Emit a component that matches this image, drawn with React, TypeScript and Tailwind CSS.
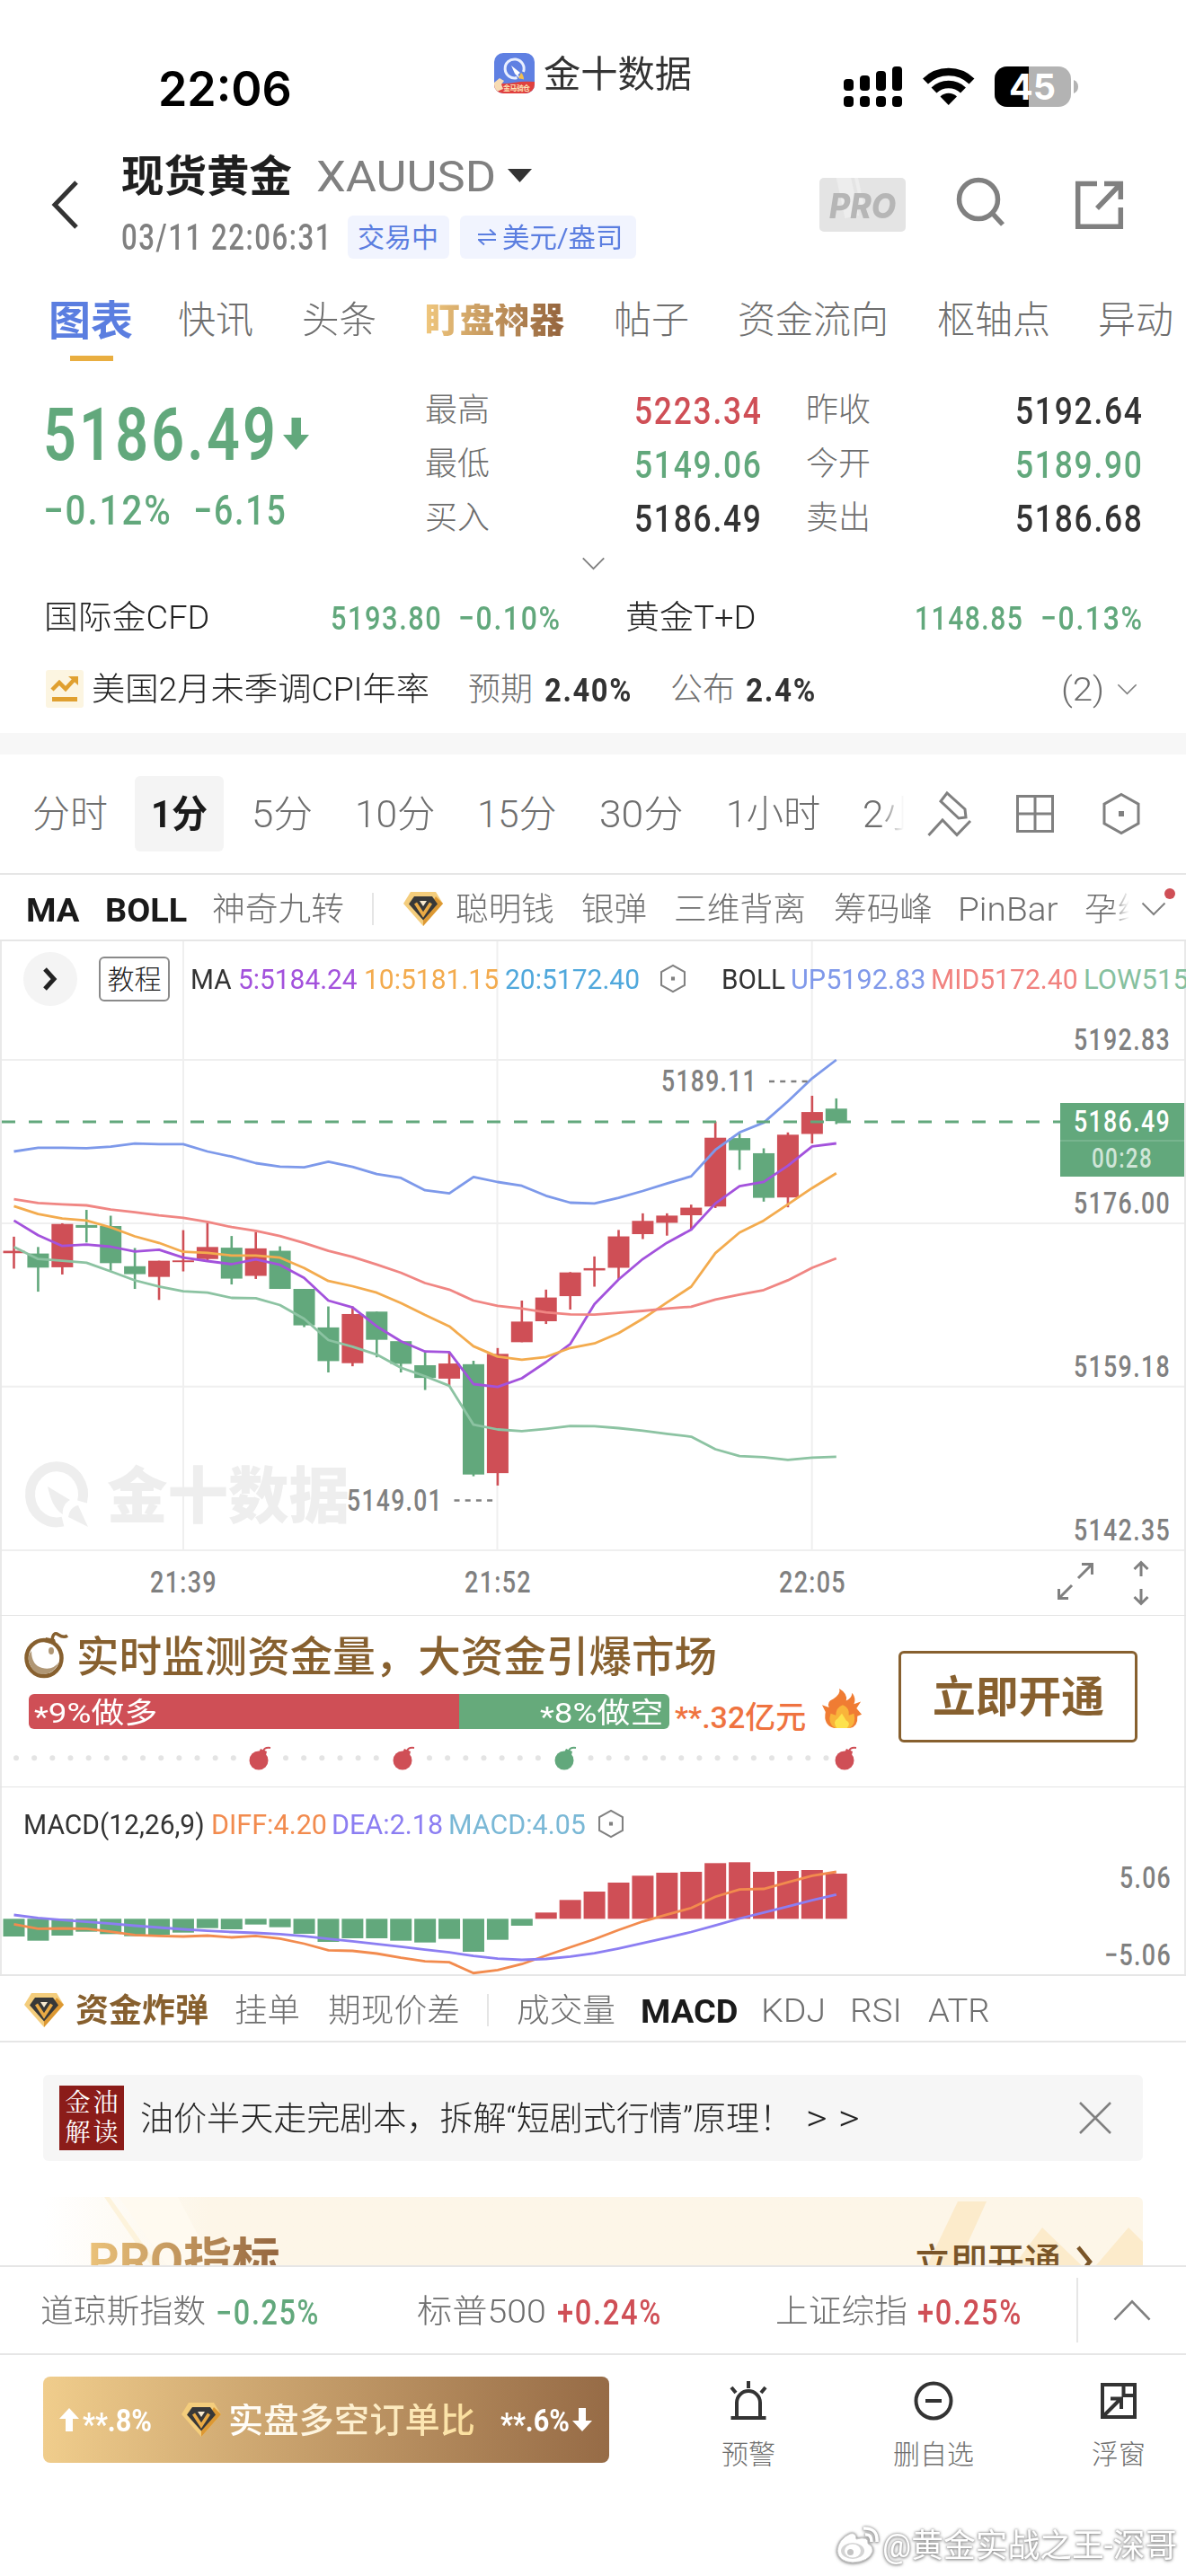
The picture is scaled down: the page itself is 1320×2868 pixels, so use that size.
import { useLayoutEffect, useRef, type ReactNode } from "react";

/* Text squeezed horizontally so that it fills the width given by its classes. */
function Fit({ className = "", inner = "", children }: { className?: string; inner?: string; children: ReactNode }) {
  const outerRef = useRef<HTMLSpanElement>(null);
  const innerRef = useRef<HTMLSpanElement>(null);
  useLayoutEffect(() => {
    const o = outerRef.current;
    const i = innerRef.current;
    if (!o || !i || !i.offsetWidth) return;
    i.style.transform = `scaleX(${o.clientWidth / i.offsetWidth})`;
  }, []);
  return (
    <span ref={outerRef} className={"block shrink-0 whitespace-nowrap leading-none " + className}>
      <span ref={innerRef} className={"relative top-px inline-block origin-left " + inner}>
        {children}
      </span>
    </span>
  );
}

/* Figures: open letter spacing with narrow digits. */
function Num({ className = "", children }: { className?: string; children: ReactNode }) {
  return (
    <Fit className={className} inner="tracking-[0.05em]">
      {children}
    </Fit>
  );
}

function Stars({ n }: { n: number }) {
  return <span className="relative top-[0.14em]">{"*".repeat(n)}</span>;
}

const RED = "#cf4f56";
const GREEN = "#62a87c";
const STEP = 26.92;
const cx = (i: number) => 15.5 + i * STEP;

/* ---------- icons ---------- */

function Diamond({ className = "" }: { className?: string }) {
  return (
    <svg viewBox="0 0 44 38" className={"h-[38px] w-[44px] shrink-0 " + className}>
      <path d="M8 0H36L44 13L22 38L0 13Z" fill="#f4cd7c" />
      <path d="M44 13L22 38V30L36 5Z" fill="#dc9833" />
      <path d="M12 5H32L38 13.5L22 31.500L6 13.500Z" fill="#383838" />
      <path d="M13.500 12.500L22 25.500L30.500 12.500" fill="none" stroke="#eaaa45" strokeWidth="3.600" />
      <path d="M18 10H26L22 16Z" fill="#f8ead0" />
    </svg>
  );
}

function Hex({ className = "", sw = 3 }: { className?: string; sw?: number }) {
  return (
    <svg viewBox="0 0 44 48" className={"shrink-0 " + className} fill="none" stroke="#808080" strokeWidth={sw}>
      <path d="M22 2.500L41 13.200V34.800L22 45.500L3 34.800V13.200Z" />
      <rect x="19" y="21" width="6" height="6" fill="#808080" stroke="none" />
    </svg>
  );
}

function Chevron({ className = "", up = false, sw = 2 }: { className?: string; up?: boolean; sw?: number }) {
  return (
    <svg viewBox="0 0 28 16" className={"shrink-0 " + className} fill="none" stroke="#808080" strokeWidth={sw}>
      <path d={up ? "M1.500 14.500L14 1.500L26.500 14.500" : "M1.500 1.500L14 14L26.500 1.500"} />
    </svg>
  );
}

function AppIcon() {
  return (
    <svg viewBox="0 0 45 45" className="h-[45px] w-[45px] shrink-0">
      <defs>
        <clipPath id="app">
          <rect width="45" height="45" rx="10" />
        </clipPath>
      </defs>
      <g clipPath="url(#app)">
        <rect width="45" height="45" fill="#5f80e2" />
        <path d="M25.500 27.500A10.500 10.500 0 1 1 32.500 21" fill="none" stroke="#e9efff" strokeWidth="3" />
        <path d="M19 14L29 22L26.500 24L29 29L23 23Z" fill="#fff" />
        <path d="M30 22Q33 25 33 29.500L27 28Z" fill="#f3c04e" />
        <path d="M0 33Q12 35 22 33T45 32V45H0Z" fill="#e0403f" />
        <path d="M0 33L6 28L11 31L8 35L10 40L3 43L0 40Z" fill="#f7dcb4" />
        <text x="25" y="42" fontSize="8" fontWeight="700" fill="#fbe3b6" textAnchor="middle" textLength="30">
          金马骑仓
        </text>
      </g>
    </svg>
  );
}

function StatusIcons() {
  const bars = [88, 84, 79, 74];
  return (
    <svg viewBox="937 70 264 54" className="mt-[70px] ml-[169px] h-[54px] w-[264px] shrink-0">
      {bars.map((t, i) => (
        <g key={t}>
          <rect x={937 + i * 18} y={t} width="11" height={101 - t} rx="4" />
          <rect x={937 + i * 18} y="107" width="11" height="12" rx="4" />
        </g>
      ))}
      <g fill="none" stroke="#000" strokeWidth="8.500">
        <path d="M1028 90.500A37 37 0 0 1 1079.500 90.500" />
        <path d="M1037.500 100.500A23.500 23.500 0 0 1 1070 100.500" />
      </g>
      <path d="M1044.500 107.500A13.500 13.500 0 0 1 1063 107.500L1053.700 117Z" />
      <clipPath id="bat">
        <rect x="1105" y="74" width="85" height="45" rx="14" />
      </clipPath>
      <g clipPath="url(#bat)">
        <rect x="1105" y="74" width="85" height="45" fill="#b3b3b3" />
        <rect x="1105" y="74" width="38" height="45" fill="#000" />
      </g>
      <path d="M1193 89Q1198 91 1198 96.500T1193 104Z" fill="#b3b3b3" />
      <text x="1121" y="111" fontSize="40" fontWeight="700" fill="#fff" fontFamily="Inter, sans-serif" textLength="52" lengthAdjust="spacingAndGlyphs">
        45
      </text>
    </svg>
  );
}

function Bomb({ x, color }: { x: number; color: string }) {
  return (
    <g fill={color}>
      <ellipse cx={x} cy="1959" rx="10.500" ry="10.500" />
      <path d={`M${x + 2} 1946L${x + 9} 1949L${x + 8} 1953L${x} 1950Z`} />
      <path d={`M${x + 5} 1949Q${x + 6} 1944 ${x + 13} 1945`} fill="none" stroke={color} strokeWidth="2" />
    </g>
  );
}

/* ---------- chart data: rows of [wick top, body top, body bottom, wick bottom, rising] ---------- */

const a = (v: number) => 1140 + v / 2.6133;
const b = (v: number) => 1140 + v / 2.3758;

const candlesA: [number, number, number, number, number][] = [
  [619, 660, 667, 712, 1], [649, 668, 709, 779, 0], [580, 582, 708, 729, 1], [541, 585, 593, 636, 0],
  [558, 588, 696, 718, 0], [652, 705, 728, 771, 0], [689, 689, 736, 803, 1], [600, 688, 693, 720, 1],
  [578, 649, 684, 690, 1], [617, 651, 741, 758, 0], [605, 653, 733, 742, 1], [647, 660, 771, 771, 0],
  [771, 771, 877, 882, 0], [822, 883, 981, 1014, 0], [822, 844, 987, 996, 1], [837, 837, 919, 970, 0],
  [923, 923, 989, 1014, 0], [955, 993, 1030, 1065, 0], [955, 988, 1032, 1052, 1], [980, 990, 1311, 1316, 0],
  [943, 960, 1307, 1343, 1], [805, 866, 926, 926, 1], [773, 796, 865, 873, 1], [722, 723, 792, 831, 1],
];
const candlesB: [number, number, number, number, number][] = [
  [615, 646, 652, 695, 1], [545, 562, 645, 675, 1], [501, 521, 556, 569, 1], [501, 507, 526, 560, 1],
  [478, 486, 506, 545, 1], [258, 301, 483, 487, 1], [290, 302, 334, 386, 0], [329, 342, 460, 470, 0],
  [287, 293, 459, 485, 1], [190, 233, 291, 316, 1], [197, 224, 257, 265, 0],
];
const candles = [
  ...candlesA.map((c) => [a(c[0]), a(c[1]), a(c[2]), a(c[3]), c[4]]),
  ...candlesB.map((c) => [b(c[0]), b(c[1]), b(c[2]), b(c[3]), c[4]]),
];

const line = (first: number[], second: number[]) =>
  [...first.map(a), ...second.map(b)].map((y, i) => `${cx(i).toFixed(1)},${y.toFixed(1)}`).join(" ");

const curves = [
  {
    color: "#7d99ea",
    pts: line(
      [371, 360, 360.5, 361.5, 357, 348, 350, 350, 371, 386, 405, 415, 417, 401, 416, 437, 448, 484, 493, 445, 460, 471, 500, 520],
      [475, 460, 442, 422, 403, 333, 287, 261, 205, 144, 95],
    ),
  },
  {
    color: "#8cc3a2",
    pts: line(
      [649, 684, 689, 695, 720, 746, 764, 778, 782, 797, 798, 818, 858, 920, 939, 962, 1000, 1025, 1053, 1166, 1180, 1185, 1178, 1170],
      [1064, 1069, 1076, 1084, 1092, 1125, 1143, 1146, 1153, 1147, 1145],
    ),
  },
  {
    color: "#a352dc",
    pts: line(
      [572, 615, 646, 642, 648, 662, 657, 680, 690, 699, 685, 701, 739, 805, 825, 880, 923, 953, 955, 1048, 1056, 1031, 984, 931],
      [741, 676, 622, 579, 544, 475, 429, 418, 375, 324, 316],
    ),
  },
  {
    color: "#f3ab4e",
    pts: line(
      [530, 553, 566, 572, 592, 618, 637, 663, 666, 674, 674, 680, 710, 748, 763, 782, 812, 847, 880, 938, 968, 977, 969, 943],
      [845, 818, 780, 737, 695, 606, 552, 520, 477, 434, 395],
    ),
  },
  {
    color: "#f08683",
    pts: line(
      [510, 521, 525, 528, 540, 548, 557, 564, 576, 591, 602, 617, 637, 660, 678, 700, 724, 754, 773, 805, 820, 828, 839, 845],
      [769, 764, 759, 753, 748, 729, 716, 704, 678, 645, 620],
    ),
  },
];

const m = (v: number) => 1800 + v / 3;
const macdBars = [
  1068, 1082, 1065, 1052, 1060, 1067, 1062, 1055, 1040, 1044, 1028, 1037, 1059, 1086, 1074, 1074, 1082, 1088, 1076, 1119,
  1079, 1032, 988, 946, 918, 888, 865, 855, 852, 823, 820, 852, 849, 846, 858,
];
const diff = [
  1027, 1042, 1041, 1042, 1052, 1063, 1066, 1068, 1065, 1071, 1066, 1075, 1092, 1114, 1116, 1125, 1139, 1151, 1154, 1190,
  1180, 1160, 1132, 1104, 1077, 1046, 1018, 995, 973, 935, 911, 909, 887, 865, 852,
];
const dea = [
  996, 1006, 1013, 1019, 1025, 1032, 1038, 1044, 1049, 1053, 1056, 1060, 1067, 1076, 1084, 1093, 1102, 1112, 1121, 1133,
  1142, 1146, 1143, 1135, 1124, 1108, 1090, 1072, 1053, 1031, 1008, 988, 968, 947, 928,
];
const macdLine = (v: number[]) => v.map((y, i) => `${cx(i).toFixed(1)},${m(y).toFixed(1)}`).join(" ");

function Label({ x, y, w, children, fill = "#808080", size = 34 }: { x: number; y: number; w: number; children: string; fill?: string; size?: number }) {
  return (
    <text x={x} y={y} fontSize={size} fontWeight="500" fill={fill} fontFamily="Roboto, sans-serif" letterSpacing="1.7" textLength={w} lengthAdjust="spacingAndGlyphs">
      {children}
    </text>
  );
}

function PriceChart() {
  return (
    <svg viewBox="0 1048 1320 750" className="absolute inset-0 h-[750px] w-[1320px]">
      <g stroke="#efefef" strokeWidth="2">
        {[1180, 1362, 1543.700, 1726].map((y) => (
          <line key={y} x1="2" x2="1318" y1={y} y2={y} />
        ))}
        {[204, 553.500, 903.700].map((x) => (
          <line key={x} x1={x} x2={x} y1="1048" y2="1726" />
        ))}
      </g>
      <g fill="#eeeeee">
        <path d="M70 1694A29.500 31 0 1 1 91.500 1672" fill="none" stroke="#eeeeee" strokeWidth="11" />
        <path d="M53 1655L78 1670C72 1673 69 1680 70 1686C60 1680 56 1668 53 1655Z" />
        <path d="M87 1676L98 1700L76 1689C77 1682 81 1677 87 1676Z" />
        <text x="119" y="1690" fontSize="68" fontWeight="900" fontFamily="'Noto Sans CJK SC', sans-serif" textLength="270" lengthAdjust="spacingAndGlyphs">
          金十数据
        </text>
      </g>
      {candles.map(([wt, bt, bb, wb, up], i) => (
        <g key={i} fill={up ? RED : GREEN}>
          <rect x={cx(i) - 1.300} y={wt} width="2.600" height={wb - wt} />
          <rect x={cx(i) - 12} y={bt} width="24" height={bb - bt} />
        </g>
      ))}
      {curves.map((c) => (
        <polyline key={c.color} points={c.pts} fill="none" stroke={c.color} strokeWidth="2.800" strokeLinejoin="round" />
      ))}
      <line x1="2" x2="1180" y1="1249" y2="1249" stroke={GREEN} strokeWidth="2.800" strokeDasharray="15 15" />
      <g stroke="#808080" strokeWidth="2.500" strokeDasharray="6 6.200">
        <line x1="856" x2="899" y1="1204" y2="1204" />
        <line x1="505.500" x2="549" y1="1670.500" y2="1670.500" />
      </g>
      <Label x={736} y={1215} w={107}>5189.11</Label>
      <Label x={386} y={1682} w={107}>5149.01</Label>
      <Label x={1195} y={1169} w={108}>5192.83</Label>
      <Label x={1195} y={1351} w={108}>5176.00</Label>
      <Label x={1195} y={1533} w={108}>5159.18</Label>
      <Label x={1195} y={1715} w={108}>5142.35</Label>
      <rect x="1180" y="1228" width="138" height="82" fill={GREEN} />
      <line x1="1180" x2="1318" y1="1270" y2="1270" stroke="#7fb894" strokeWidth="1.500" />
      <Label x={1195} y={1260} w={108} fill="#ffffff">5186.49</Label>
      <Label x={1215} y={1300} w={68} fill="#cfe5d7" size={31}>00:28</Label>
      <Label x={167} y={1773} w={75}>21:39</Label>
      <Label x={517} y={1773} w={75}>21:52</Label>
      <Label x={867} y={1773} w={75}>22:05</Label>
      <g fill="none" stroke="#808080" strokeWidth="3">
        <path d="M1200 1757L1215 1742M1204 1741.500H1215.500V1753" />
        <path d="M1193 1765L1178 1780M1178.500 1769V1779.500H1189" />
        <path d="M1270 1755V1740M1262.500 1747L1270 1739.500L1277.500 1747" />
        <path d="M1270 1769V1785M1262.500 1778L1270 1785.500L1277.500 1778" />
      </g>
    </svg>
  );
}

function MacdChart() {
  return (
    <svg viewBox="0 2070 1320 129" className="h-[129px] w-[1320px]">
      {macdBars.map((v, i) => {
        const y = m(v);
        const zero = 2136.300;
        return <rect key={i} x={cx(i) - 12} y={Math.min(y, zero)} width="24" height={Math.abs(y - zero)} fill={y < zero ? RED : GREEN} />;
      })}
      <polyline points={macdLine(diff)} fill="none" stroke="#f28b4e" strokeWidth="2.800" />
      <polyline points={macdLine(dea)} fill="none" stroke="#8c7ef2" strokeWidth="2.800" />
      <Label x={1246} y={2102} w={58}>5.06</Label>
      <Label x={1229} y={2188} w={75}>−5.06</Label>
    </svg>
  );
}

/* ---------- sections ---------- */

function StatusBar() {
  return (
    <div className="flex h-[150px] items-start">
      <Fit className="mt-[72px] ml-[176px] w-[149px] font-['Inter'] text-[53px] font-semibold text-black">22:06</Fit>
      <div className="mt-[59px] ml-[225px] flex h-[45px] items-center">
        <AppIcon />
        <Fit className="ml-[10px] w-[165px] pt-px text-[41px] text-[#333]">金十数据</Fit>
      </div>
      <StatusIcons />
    </div>
  );
}

function Header() {
  return (
    <div className="flex h-[160px]">
      <svg viewBox="0 0 30 56" className="mt-[50px] ml-[57px] h-[56px] w-[30px] shrink-0" fill="none" stroke="#333" strokeWidth="5">
        <path d="M28 3L4 28L28 53" />
      </svg>
      <div className="ml-[48px] w-[777px]">
        <div className="flex h-[90px] items-center pt-px">
          <Fit className="w-[190px] text-[48px] font-bold text-[#1f1f1f]">现货黄金</Fit>
          <Fit className="ml-[27px] w-[200px] text-[49px] text-[#808080]">XAUUSD</Fit>
          <svg viewBox="0 0 27 15" className="ml-[13px] h-[15px] w-[27px]">
            <path d="M0 0H27L13.500 15Z" fill="#333" />
          </svg>
        </div>
        <div className="flex h-[48px] items-center">
          <Num className="w-[235px] text-[40px] font-medium text-[#808080]">03/11 22:06:31</Num>
          <div className="ml-[17px] flex h-[48px] w-[113px] items-center rounded-[6px] bg-[#f1f4fe] pl-[11px]">
            <Fit className="w-[90px] text-[30px] text-[#5b7ee0]">交易中</Fit>
          </div>
          <div className="ml-[12px] flex h-[48px] w-[196px] items-center rounded-[6px] bg-[#f1f4fe] pl-[20px]">
            <svg viewBox="0 0 20 20" className="h-[20px] w-[20px]" fill="none" stroke="#5b7ee0" strokeWidth="2">
              <path d="M0 7H19L13 1.500M20 13H1L7 18.500" />
            </svg>
            <Fit className="ml-[7px] w-[134px] text-[30px] text-[#5b7ee0]">美元/盎司</Fit>
          </div>
        </div>
      </div>
      <div className="relative mt-[48px] flex h-[60px] w-[96px] items-center justify-center overflow-hidden rounded-[5px] bg-[#e4e4e4]">
        <span className="absolute -top-4 left-[22px] h-[60px] w-[16px] -rotate-12 bg-[#ededed]" />
        <span className="absolute -top-4 left-[42px] h-[60px] w-[4px] -rotate-12 bg-[#ededed]" />
        <Fit className="relative w-[74px] font-['Inter'] text-[38px] font-extrabold italic text-[#b6b6b6]">PRO</Fit>
      </div>
      <svg viewBox="0 0 60 60" className="mt-[45px] ml-[54px] h-[60px] w-[60px]" fill="none" stroke="#808080" strokeWidth="5.500">
        <circle cx="27" cy="27" r="21.500" />
        <path d="M42 42L54 55" />
      </svg>
      <svg viewBox="0 0 56 56" className="mt-[50px] ml-[74px] h-[56px] w-[56px]" fill="none" stroke="#808080" strokeWidth="5.500">
        <path d="M25 4.500H3.700V52.300H51.300V31M33 4.500H51.300V22M50 6L25 32" />
      </svg>
    </div>
  );
}

function Tabs() {
  const plain = "text-[42px] font-light text-[#6e6e6e]";
  return (
    <div className="flex h-[92px] items-start overflow-hidden pt-[25px] [&>*]:flex [&>*]:h-[42px] [&>*]:items-center">
      <div className="relative ml-[54px] !h-[67px] !items-start">
        <Fit className="-mt-[2px] w-[94px] text-[46px] font-bold text-[#5b7ee0]">图表</Fit>
        <span className="absolute bottom-0 left-[24px] h-[6px] w-[48px] bg-[#e9ae40]" />
      </div>
      <Fit className={"ml-[50px] w-[84px] " + plain}>快讯</Fit>
      <Fit className={"ml-[54px] w-[83px] " + plain}>头条</Fit>
      <div className="relative ml-[54px]">
        <Fit
          className="w-[155px] text-[39px] font-black"
          inner="-skew-x-6 bg-gradient-to-r from-[#f0c77d] to-[#93633d] bg-clip-text text-transparent"
        >
          盯盘神器
        </Fit>
        <span className="absolute top-[15px] left-[95px] h-[12px] w-[12px] rotate-45 border-2 border-white bg-[#b48a5c]" />
      </div>
      <Fit className={"ml-[55px] w-[84px] " + plain}>帖子</Fit>
      <Fit className={"ml-[54px] w-[168px] " + plain}>资金流向</Fit>
      <Fit className={"ml-[54px] w-[126px] " + plain}>枢轴点</Fit>
      <Fit className={"ml-[53px] w-[84px] " + plain}>异动</Fit>
    </div>
  );
}

function StatRow({ l1, v1, c1, l2, v2, c2 }: { l1: string; v1: string; c1: string; l2: string; v2: string; c2: string }) {
  return (
    <div className="flex h-[60px] items-center">
      <Fit className="w-[72px] text-[36px] font-light text-[#6e6e6e]">{l1}</Fit>
      <Num className={"ml-[161px] w-[143px] text-[43px] font-medium " + c1}>{v1}</Num>
      <Fit className="ml-[48px] w-[72px] text-[36px] font-light text-[#6e6e6e]">{l2}</Fit>
      <Num className={"ml-[161px] w-[143px] text-[43px] font-medium " + c2}>{v2}</Num>
    </div>
  );
}

function Quote() {
  return (
    <div className="h-[414px]">
      <div className="flex h-[204px] pt-[24px] text-[#62a87c]">
        <div className="w-[423px] pl-[48px]">
          <div className="mt-[16px] flex items-center">
            <Num className="w-[262px] text-[82px] font-semibold">5186.49</Num>
            <svg viewBox="0 0 29 36" className="ml-[5px] h-[36px] w-[29px]">
              <path d="M9.500 0H20V19H29L14.500 36L0 19H9.500Z" fill="#62a87c" />
            </svg>
          </div>
          <div className="mt-[20px] flex">
            <Num className="w-[144px] text-[46px] font-medium">−0.12%</Num>
            <Num className="ml-[23px] w-[105px] text-[46px] font-medium">−6.15</Num>
          </div>
        </div>
        <div className="ml-[50px]">
          <StatRow l1="最高" v1="5223.34" c1="text-[#cf4f56]" l2="昨收" v2="5192.64" c2="text-[#333]" />
          <StatRow l1="最低" v1="5149.06" c1="text-[#62a87c]" l2="今开" v2="5189.90" c2="text-[#62a87c]" />
          <StatRow l1="买入" v1="5186.49" c1="text-[#333]" l2="卖出" v2="5186.68" c2="text-[#333]" />
        </div>
      </div>
      <div className="flex h-[42px] items-center justify-center">
        <Chevron className="h-[15px] w-[27px]" />
      </div>
      <div className="flex h-[78px] items-center text-[#62a87c]">
        <Fit className="ml-[49px] w-[184px] text-[36px] font-light text-[#222]">国际金CFD</Fit>
        <Num className="ml-[135px] w-[124px] text-[37px] font-medium">5193.80</Num>
        <Num className="ml-[18px] w-[115px] text-[37px] font-medium">−0.10%</Num>
        <Fit className="ml-[71px] w-[145px] text-[36px] font-light text-[#222]">黄金T+D</Fit>
        <Num className="ml-[177px] w-[121px] text-[37px] font-medium">1148.85</Num>
        <Num className="ml-[19px] w-[115px] text-[37px] font-medium">−0.13%</Num>
      </div>
      <div className="flex h-[82px] items-center">
        <svg viewBox="0 0 42 42" className="ml-[51px] h-[42px] w-[42px]">
          <rect width="42" height="42" rx="3" fill="#fcf5e1" />
          <path d="M7 22L15 14L22 21L33 9" fill="none" stroke="#e0a030" strokeWidth="4.500" />
          <path d="M25 7H36V17Z" fill="#e0a030" />
          <rect x="7" y="30" width="28" height="5" fill="#e0a030" />
        </svg>
        <Fit className="ml-[9px] w-[376px] text-[36px] font-light text-[#222]">美国2月未季调CPI年率</Fit>
        <Fit className="ml-[43px] w-[72px] text-[36px] font-light text-[#6e6e6e]">预期</Fit>
        <Num className="ml-[13px] w-[98px] text-[37px] font-bold text-[#333]">2.40%</Num>
        <Fit className="ml-[42px] w-[72px] text-[36px] font-light text-[#6e6e6e]">公布</Fit>
        <Num className="ml-[12px] w-[79px] text-[37px] font-bold text-[#333]">2.4%</Num>
        <Fit className="ml-[272px] w-[48px] text-[36px] font-light text-[#6e6e6e]">(2)</Fit>
        <Chevron className="ml-[14px] h-[13px] w-[23px]" />
      </div>
    </div>
  );
}

function Periods() {
  const p = "text-[42px] font-light text-[#6e6e6e]";
  return (
    <div className="flex h-[132px] items-center">
      <Fit className={"ml-[36px] w-[84px] " + p}>分时</Fit>
      <div className="ml-[30px] flex h-[84px] w-[99px] items-center justify-center rounded-[6px] bg-[#f4f4f4]">
        <Fit className="w-[63px] text-[42px] font-bold text-[#1a1a1a]">1分</Fit>
      </div>
      <Fit className={"ml-[31px] w-[68px] " + p}>5分</Fit>
      <Fit className={"ml-[47px] w-[90px] " + p}>10分</Fit>
      <Fit className={"ml-[46px] w-[89px] " + p}>15分</Fit>
      <Fit className={"ml-[47px] w-[94px] " + p}>30分</Fit>
      <Fit className={"ml-[47px] w-[105px] " + p}>1小时</Fit>
      <div className="ml-[47px] w-[46px] overflow-hidden [mask-image:linear-gradient(to_right,black_40%,transparent)]">
        <Fit className={"w-[108px] " + p}>2小时</Fit>
      </div>
      <svg viewBox="1028 876 56 56" className="ml-[23px] h-[56px] w-[56px]" fill="none" stroke="#808080" strokeWidth="3">
        <path d="M1053 881L1046 890L1066 909L1074 908L1073 899Z" />
        <path d="M1032.500 928L1048 911L1064 927.500L1079 912" />
      </svg>
      <svg viewBox="0 0 42 42" className="ml-[46px] h-[42px] w-[42px]" fill="none" stroke="#808080" strokeWidth="3">
        <path d="M1.500 1.500H40.500V40.500H1.500ZM21 1.500V40.500M1.500 21H40.500" />
      </svg>
      <Hex className="ml-[53px] h-[48px] w-[44px]" />
    </div>
  );
}

function Indicators() {
  const p = "text-[36px] font-light text-[#6e6e6e]";
  return (
    <div className="relative flex h-[72px] items-center border-t-0 pt-[4px]">
      <Fit className="ml-[29px] w-[60px] text-[37px] font-bold text-[#1a1a1a]">MA</Fit>
      <Fit className="ml-[28px] w-[91px] text-[37px] font-bold text-[#1a1a1a]">BOLL</Fit>
      <Fit className={"ml-[28px] w-[147px] " + p}>神奇九转</Fit>
      <span className="ml-[31px] h-[36px] w-[2px] bg-[#e5e5e5]" />
      <Diamond className="ml-[33px]" />
      <Fit className={"ml-[14px] w-[110px] " + p}>聪明钱</Fit>
      <Fit className={"ml-[30px] w-[73px] " + p}>银弹</Fit>
      <Fit className={"ml-[30px] w-[147px] " + p}>三维背离</Fit>
      <Fit className={"ml-[31px] w-[110px] " + p}>筹码峰</Fit>
      <Fit className={"ml-[28px] w-[112px] " + p}>PinBar</Fit>
      <div className="ml-[29px] w-[50px] overflow-hidden [mask-image:linear-gradient(to_right,black_60%,transparent)]">
        <Fit className={"w-[73px] " + p}>孕线</Fit>
      </div>
      <Chevron className="ml-[12px] h-[16px] w-[30px]" />
      <span className="absolute top-[15px] left-[1296px] h-[12px] w-[12px] rounded-full bg-[#cf4f56]" />
    </div>
  );
}

function ChartLegend() {
  const t = "text-[31px]";
  return (
    <div className="relative flex h-[83px] items-center overflow-hidden">
      <div className="ml-[26px] flex h-[60px] w-[60px] shrink-0 items-center justify-center rounded-full bg-[#f4f4f4]">
        <svg viewBox="0 0 18 28" className="h-[28px] w-[18px]" fill="none" stroke="#222" strokeWidth="5">
          <path d="M3 3L13 14L3 25" />
        </svg>
      </div>
      <div className="ml-[24px] flex h-[50px] w-[79px] shrink-0 items-center justify-center rounded-[6px] border-2 border-[#8a8a8a] bg-white">
        <Fit className="w-[60px] text-[30px] font-light text-[#222]">教程</Fit>
      </div>
      <Fit className={"ml-[23px] w-[46px] text-[#333] " + t}>MA</Fit>
      <Fit className={"ml-[7px] w-[133px] text-[#a352dc] " + t}>5:5184.24</Fit>
      <Fit className={"ml-[7px] w-[150px] text-[#f3ab4e] " + t}>10:5181.15</Fit>
      <Fit className={"ml-[7px] w-[150px] text-[#50a8dc] " + t}>20:5172.40</Fit>
      <Hex className="ml-[22px] h-[33px] w-[30px]" />
      <Fit className={"ml-[39px] w-[71px] text-[#333] " + t}>BOLL</Fit>
      <Fit className={"ml-[6px] w-[150px] text-[#8099ea] " + t}>UP5192.83</Fit>
      <Fit className={"ml-[6px] w-[164px] text-[#f1827f] " + t}>MID5172.40</Fit>
      <Fit className={"ml-[6px] w-[177px] text-[#86c09e] " + t}>LOW5151.97</Fit>
    </div>
  );
}

const dots: number[] = [];
[[18, 13], [318, 6], [478, 7], [657.500, 14]].forEach(([start, n]) => {
  for (let i = 0; i < n; i++) dots.push(start + i * 20.150);
});

function Promo() {
  return (
    <div className="flex h-[191px] border-t border-[#e4e4e4]">
      <div className="w-[1000px] shrink-0">
        <div className="mt-[17px] flex h-[54px] items-center">
          <svg viewBox="28 1816 50 54" className="ml-[27px] h-[54px] w-[50px]">
            <ellipse cx="50" cy="1846" rx="19.500" ry="20" fill="#fff" stroke="#87602f" strokeWidth="4.500" />
            <path d="M33 1850Q38 1865 50 1864T67 1850Q60 1860 48 1857T36 1838Q31 1844 33 1850Z" fill="#b09775" />
            <ellipse cx="58" cy="1838" rx="3" ry="4" fill="#b09775" />
            <path d="M52 1823L62 1825L64 1832L50 1828Z" fill="#87602f" />
            <path d="M59 1826Q60 1816 66 1820T76 1821" fill="none" stroke="#87602f" strokeWidth="3.500" />
          </svg>
          <Fit className="ml-[8px] w-[713px] text-[47px] font-medium text-[#87602f]">实时监测资金量，大资金引爆市场</Fit>
        </div>
        <div className="mt-[10px] flex h-[50px] items-start">
          <div className="mt-[6px] ml-[32px] flex h-[39px] w-[713px] overflow-hidden rounded-[6px]">
            <div className="flex w-[479px] items-center bg-[#cf4f56] pl-[6px]">
              <Fit className="w-[137px] text-[32px] text-white"><Stars n={1} />9%做多</Fit>
            </div>
            <div className="flex w-[234px] items-center justify-end bg-[#66aa7b] pr-[7px]">
              <Fit className="w-[137px] text-[32px] text-white"><Stars n={1} />8%做空</Fit>
            </div>
          </div>
          <Fit className="mt-[14px] ml-[6px] w-[146px] text-[34px] font-medium text-[#ef7340]">**.32亿元</Fit>
          <svg viewBox="0 0 46 48" className="ml-[17px] h-[46px] w-[46px]">
            <path d="M14 46Q1 42 4 27L0 19L8 22Q5 15 13 12Q22 6 20 0Q30 6 28 14Q34 12 35 5Q40 12 37 18L45 15L40 23L46 30L41 32Q42 44 32 46Z" fill="#f07c33" />
            <path d="M15 46Q6 40 10 29L16 31Q16 22 24 19Q32 22 31 31L37 29Q40 41 32 46Z" fill="#f9b43a" />
            <path d="M17 46Q12 38 18 35L23 29L28 37Q34 40 29 46Z" fill="#fde24c" />
          </svg>
        </div>
        <svg viewBox="0 1940 998 32" className="mt-[11px] h-[32px] w-[998px]">
          {dots.map((x) => (
            <circle key={x} cx={x} cy="1956.300" r="3" fill="#e4e4e4" />
          ))}
          <Bomb x={288} color={RED} />
          <Bomb x={448} color={RED} />
          <Bomb x={628} color={GREEN} />
          <Bomb x={940} color={RED} />
        </svg>
      </div>
      <div className="mt-[39px] flex h-[102px] w-[266px] items-center justify-center rounded-[6px] border-[3px] border-[#87602f]">
        <Fit className="w-[191px] text-[48px] font-bold text-[#87602f]">立即开通</Fit>
      </div>
    </div>
  );
}

function Macd() {
  const t = "text-[31px]";
  return (
    <div className="h-[209px] border-t border-[#e4e4e4]">
      <div className="flex h-[80px] items-center">
        <Fit className={"ml-[26px] w-[202px] text-[#333] " + t}>MACD(12,26,9)</Fit>
        <Fit className={"ml-[7px] w-[129px] text-[#f28b4e] " + t}>DIFF:4.20</Fit>
        <Fit className={"ml-[5px] w-[124px] text-[#8c7ef2] " + t}>DEA:2.18</Fit>
        <Fit className={"ml-[6px] w-[153px] text-[#7ab8d6] " + t}>MACD:4.05</Fit>
        <Hex className="ml-[13px] h-[33px] w-[30px]" />
      </div>
      <MacdChart />
    </div>
  );
}

function SubIndicators() {
  const p = "text-[36px] font-light text-[#6e6e6e]";
  return (
    <div className="flex h-[74px] items-center border-b-2 border-[#e6e6e6] pt-[4px]">
      <Diamond className="ml-[27px]" />
      <Fit className="ml-[13px] w-[148px] text-[36px] font-bold text-[#87602f]">资金炸弹</Fit>
      <Fit className={"ml-[29px] w-[73px] " + p}>挂单</Fit>
      <Fit className={"ml-[31px] w-[147px] " + p}>期现价差</Fit>
      <span className="ml-[30px] h-[36px] w-[2px] bg-[#e5e5e5]" />
      <Fit className={"ml-[31px] w-[110px] " + p}>成交量</Fit>
      <Fit className="ml-[28px] w-[109px] text-[37px] font-bold text-[#1a1a1a]">MACD</Fit>
      <Fit className={"ml-[25px] w-[72px] " + p}>KDJ</Fit>
      <Fit className={"ml-[27px] w-[58px] " + p}>RSI</Fit>
      <Fit className={"ml-[29px] w-[69px] " + p}>ATR</Fit>
    </div>
  );
}

function News() {
  return (
    <div className="mx-[48px] mt-[36px] flex h-[96px] items-center rounded-[6px] bg-[#f6f6f6]">
      <div className="ml-[18px] flex h-[72px] w-[72px] shrink-0 flex-col items-center justify-center gap-[5px] bg-[#8b1c19] font-['Liberation_Serif','Noto_Serif_CJK_SC','Noto_Sans_CJK_SC'] text-[28px] leading-none text-white">
        <span className="-mr-[3px] tracking-[3px]">金油</span>
        <span className="-mr-[3px] tracking-[3px]">解读</span>
      </div>
      <Fit className="ml-[18px] w-[726px] text-[37px] font-light text-[#222]">油价半天走完剧本，拆解“短剧式行情”原理！</Fit>
      <Fit className="ml-[15px] w-[24px] text-[40px] font-light text-[#222]">&gt;</Fit>
      <Fit className="ml-[12px] w-[24px] text-[40px] font-light text-[#222]">&gt;</Fit>
      <svg viewBox="0 0 36 36" className="ml-[244px] h-[36px] w-[36px] shrink-0" fill="none" stroke="#808080" strokeWidth="2.500">
        <path d="M1 1L35 35M35 1L1 35" />
      </svg>
    </div>
  );
}

function ProBanner() {
  return (
    <div className="relative mx-[48px] mt-[40px] flex h-[76px] items-start overflow-hidden rounded-t-[6px] bg-gradient-to-r from-white to-[#fdf6e8] to-15%">
      <svg viewBox="0 0 1224 76" className="absolute inset-0 h-[76px] w-[1224px]">
        <path d="M68 0H74L128 76H120Z" fill="#fdf3dc" />
        <path d="M84 0H150L190 76H138Z" fill="#fffaf0" />
        <path d="M1018 5H1050L1018 76H984Z" fill="#fcebcb" />
        <path d="M1112 34L1170 90H1070ZM1208 34L1224 50V90H1160Z" fill="#fcebcb" />
      </svg>
      <Fit
        className="relative mt-[43px] ml-[50px] w-[214px] text-[54px] font-bold"
        inner="bg-gradient-to-r from-[#ecc37a] to-[#94663f] bg-clip-text text-transparent"
      >
        PRO指标
      </Fit>
      <Fit className="relative mt-[52px] ml-[705px] w-[164px] text-[41px] font-medium text-[#7a5528]">立即开通</Fit>
      <svg viewBox="0 0 20 36" className="relative mt-[54px] ml-[16px] h-[36px] w-[20px]" fill="none" stroke="#7a5528" strokeWidth="4.500">
        <path d="M3 2L16 18L3 34" />
      </svg>
    </div>
  );
}

function IndexBar() {
  const p = "text-[36px] font-light text-[#6e6e6e]";
  return (
    <div className="flex h-[100px] items-center border-y-2 border-[#e6e6e6]">
      <div className="flex pt-[4px]">
        <Fit className={"ml-[45px] w-[184px] " + p}>道琼斯指数</Fit>
        <Num className="ml-[11px] w-[116px] text-[38px] font-medium text-[#62a87c]">−0.25%</Num>
        <Fit className={"ml-[108px] w-[144px] " + p}>标普500</Fit>
        <Num className="ml-[12px] w-[117px] text-[38px] font-medium text-[#cf4f56]">+0.24%</Num>
        <Fit className={"ml-[126px] w-[147px] " + p}>上证综指</Fit>
        <Num className="ml-[11px] w-[117px] text-[38px] font-medium text-[#cf4f56]">+0.25%</Num>
      </div>
      <span className="ml-[60px] h-[72px] w-[2px] bg-[#e6e6e6]" />
      <Chevron up className="ml-[37px] h-[25px] w-[46px]" sw={1.7} />
    </div>
  );
}

function Action({ icon, label, className }: { icon: ReactNode; label: string; className: string }) {
  return (
    <div className={"flex flex-col items-center " + className}>
      <div className="mt-[28px] h-[46px] w-[46px]">{icon}</div>
      <span className="mt-[22px] text-[30px] leading-none font-light whitespace-nowrap text-[#6e6e6e]">{label}</span>
    </div>
  );
}

function BottomBar() {
  const svg = { viewBox: "0 0 46 46", className: "h-[46px] w-[46px]", fill: "none", stroke: "#333", strokeWidth: 4 };
  return (
    <div className="relative flex h-[246px]">
      <div className="mt-[24px] ml-[48px] flex h-[96px] w-[630px] items-center rounded-[8px] bg-gradient-to-r from-[#f0cd8c] to-[#966b46] text-white">
        <svg viewBox="0 0 22 26" className="ml-[18px] h-[26px] w-[22px]">
          <path d="M11 0L22 12H15V26H7V12H0Z" fill="#fff" />
        </svg>
        <Fit className="ml-[4px] w-[77px] text-[35px] font-bold"><Stars n={2} />.8%</Fit>
        <Diamond className="ml-[33px]" />
        <Fit className="ml-[8px] w-[275px] text-[39px] font-medium" inner="bg-gradient-to-r from-white to-[#fbdf9c] bg-clip-text text-transparent">
          实盘多空订单比
        </Fit>
        <Fit className="ml-[28px] w-[77px] text-[35px] font-bold"><Stars n={2} />.6%</Fit>
        <svg viewBox="0 0 22 26" className="ml-[3px] h-[26px] w-[22px]">
          <path d="M11 26L22 14H15V0H7V14H0Z" fill="#fff" />
        </svg>
      </div>
      <Action
        className="ml-[110px] w-[90px]"
        label="预警"
        icon={
          <svg {...svg}>
            <path d="M10 41V25A13 13 0 0 1 36 25V41M3.500 42H42.500M23 1V9M4 8L9 14M42 8L37 14" />
          </svg>
        }
      />
      <Action
        className="ml-[116px] w-[90px]"
        label="删自选"
        icon={
          <svg {...svg}>
            <circle cx="23" cy="23" r="19.500" />
            <path d="M14 23H32" />
          </svg>
        }
      />
      <Action
        className="ml-[116px] w-[90px]"
        label="浮窗"
        icon={
          <svg {...svg}>
            <path d="M5 5H41V41H5ZM28.500 5V17H41M6 40L25 21M14 20.500H26V32" />
          </svg>
        }
      />
      <div className="absolute top-[191px] left-[929px] flex items-center [filter:drop-shadow(0_0_1.500px_#888)_drop-shadow(0_1px_1.500px_#aaa)]">
        <svg viewBox="0 0 50 42" className="h-[42px] w-[50px]">
          <path d="M3 27Q4 14 17 8Q24 6 24 14Q38 10 37 19Q43 22 42 28Q38 39 20 40Q4 39 3 27Z" fill="#fff" stroke="#ccc" strokeWidth="1" />
          <ellipse cx="20" cy="27" rx="13" ry="9" fill="#d4d4d4" />
          <ellipse cx="20" cy="27" rx="9" ry="7.500" fill="#fff" />
          <circle cx="17.500" cy="28.500" r="3.500" fill="#c4c4c4" />
          <path d="M34 9Q41 8 41 17M32 2Q48 1 47 17" fill="none" stroke="#fff" strokeWidth="3.500" />
        </svg>
        <Fit className="ml-[3px] w-[328px] text-[36px] text-white">@黄金实战之王-深哥</Fit>
      </div>
    </div>
  );
}

export default function App() {
  return (
    <div className="h-[2868px] w-[1320px] overflow-hidden bg-white font-['Roboto','Noto_Sans_CJK_SC',sans-serif]">
      <StatusBar />
      <Header />
      <Tabs />
      <Quote />
      <div className="h-[24px] bg-[#f7f7f7]" />
      <Periods />
      <div className="border-y-2 border-[#e6e6e6]">
        <Indicators />
      </div>
      <div className="border-x-2 border-[#e9e9e9]">
        <div className="-mx-[2px]">
          <div className="relative h-[750px]">
            <PriceChart />
            <ChartLegend />
          </div>
          <Promo />
          <Macd />
        </div>
      </div>
      <div className="border-t-2 border-[#e6e6e6]">
        <SubIndicators />
      </div>
      <News />
      <ProBanner />
      <IndexBar />
      <BottomBar />
    </div>
  );
}
